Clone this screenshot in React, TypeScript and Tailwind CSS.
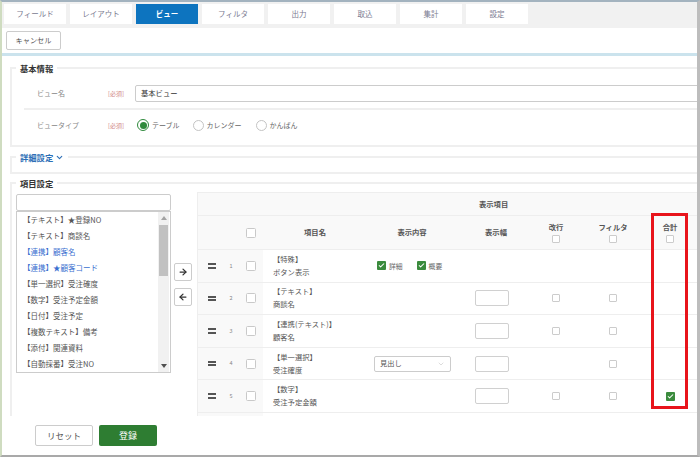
import React from 'react';
import { ArrowLeft, ArrowRight, Check, ChevronDown } from 'lucide-react';

const tabs = ['フィールド', 'レイアウト', 'ビュー', 'フィルタ', '出力', '取込', '集計', '設定'];

const listItems = [
  { label: '【テキスト】★登録NO' },
  { label: '【テキスト】商談名' },
  { label: '【連携】顧客名', link: true },
  { label: '【連携】★顧客コード', link: true },
  { label: '【単一選択】受注確度' },
  { label: '【数字】受注予定金額' },
  { label: '【日付】受注予定' },
  { label: '【複数テキスト】備考' },
  { label: '【添付】関連資料' },
  { label: '【自動採番】受注NO' },
];

type Row = {
  type: string;
  name: string;
  content?: 'checks' | 'select';
  width?: boolean;
  wrap?: boolean;
  filter?: boolean;
  total?: 'off' | 'on';
};

const rows: Row[] = [
  { type: '【特殊】', name: 'ボタン表示', content: 'checks' },
  { type: '【テキスト】', name: '商談名', width: true, wrap: true, filter: true },
  { type: '【連携(テキスト)】', name: '顧客名', width: true, wrap: true, filter: true },
  { type: '【単一選択】', name: '受注確度', content: 'select', width: true, filter: true },
  { type: '【数字】', name: '受注予定金額', width: true, wrap: true, filter: true, total: 'on' },
  { type: '【日付】', name: '受注予定', width: true, wrap: true, filter: true },
];

const cols = 'grid grid-cols-[25px_16px_24px_104px_90px_78px_42px_72px_42px_1fr]';

const Box = ({ size = 10 }: { size?: 8 | 10 }) => (
  <span
    className={
      size === 10
        ? 'block w-[10px] h-[10px] border border-[#c9c9c9] rounded-[1.5px] bg-white'
        : 'block w-[8px] h-[8px] border border-[#cccccc] rounded-[1px] bg-white'
    }
  />
);

const GreenBox = () => (
  <span className="flex items-center justify-center w-[9px] h-[9px] bg-[#3b8b3d] rounded-[1px]">
    <Check className="w-[7px] h-[7px] text-white" strokeWidth={3.5} />
  </span>
);

const Radio = ({ checked }: { checked?: boolean }) =>
  checked ? (
    <span className="flex items-center justify-center w-[12px] h-[12px] rounded-full border-[1.5px] border-[#2f8a3c]">
      <span className="w-[7px] h-[7px] rounded-full bg-[#2f8a3c]" />
    </span>
  ) : (
    <span className="block w-[11px] h-[11px] rounded-full border border-[#c4c4c4] bg-white" />
  );

const Handle = () => (
  <span className="flex flex-col gap-[1.5px]">
    <span className="block w-[8px] h-[2px] bg-[#555]" />
    <span className="block w-[8px] h-[2px] bg-[#555]" />
  </span>
);

export default function App() {
  return (
    <div className="w-[700px] h-[457px] overflow-hidden bg-white flex flex-col border-t-2 border-t-[#a3b3bf] border-r-[3px] border-r-[#bdbdbd] border-b-2 border-b-[#a9a9a9] border-l-2 border-l-[#cfdcc0] font-['Noto_Sans_CJK_JP','Noto_Sans',sans-serif] text-[#555]">
      {/* tabs */}
      <div className="h-[26px] shrink-0 bg-[#f1f1f1] flex gap-[4px] pl-[2px] pt-[2px]">
        {tabs.map((t) => (
          <div
            key={t}
            className={
              t === 'ビュー'
                ? 'w-[62px] h-[20px] flex items-center justify-center bg-[#0d74bf] text-white text-[7.5px] font-bold'
                : 'w-[62px] h-[20px] flex items-center justify-center bg-white text-[#7a7a90] text-[7.5px]'
            }
          >
            {t}
          </div>
        ))}
      </div>

      {/* toolbar */}
      <div className="h-[25px] shrink-0 pl-[4px] pt-[3px]">
        <button className="w-[55px] h-[19px] border border-[#cccccc] rounded-[2px] bg-white text-[7.2px] text-[#555] flex items-center justify-center">
          キャンセル
        </button>
      </div>
      <div className="h-[3px] shrink-0 bg-[#cbe3ed]" />

      {/* scroll area */}
      <div className="flex-1 overflow-hidden pl-[8px] pt-[6px]">
        <fieldset className="border-2 border-r-0 border-[#efefef]">
          <legend className="ml-[4px] px-[4px] text-[8.3px] leading-[12px] font-bold text-[#333]">基本情報</legend>
          <div className="ml-[12px] mt-[4px]">
            <div className="h-[32px] flex items-center border-b-2 border-[#efefef]">
              <div className="w-[84px] pl-[13px] text-[7px] text-[#888]">ビュー名</div>
              <div className="w-[27px] text-[6px] text-[#d08585]">[必須]</div>
              <div className="flex-1 mr-[-10px] h-[17px] border border-[#cccccc] rounded-[2px] flex items-center px-[5px] text-[7.3px] text-[#333]">
                基本ビュー
              </div>
            </div>
            <div className="h-[30px] flex items-center">
              <div className="w-[84px] pl-[13px] text-[7px] text-[#888]">ビュータイプ</div>
              <div className="w-[27px] text-[6px] text-[#d08585]">[必須]</div>
              <div className="flex items-center text-[7px] text-[#666] pl-[2px]">
                <Radio checked />
                <span className="ml-[3px] mr-[13px]">テーブル</span>
                <Radio />
                <span className="ml-[3px] mr-[14px]">カレンダー</span>
                <Radio />
                <span className="ml-[3px]">かんぱん</span>
              </div>
            </div>
          </div>
          <div className="h-[5px]" />
        </fieldset>

        <fieldset className="mt-[4px] border-2 border-r-0 border-[#efefef]">
          <legend className="ml-[4px] px-[4px] text-[8.3px] leading-[12px] font-bold text-[#2d6fb6] flex items-center gap-[2px]">
            詳細設定
            <ChevronDown className="w-[9px] h-[9px]" strokeWidth={3} />
          </legend>
          <div className="h-[9px]" />
        </fieldset>

        <fieldset className="mt-[3px] border-2 border-r-0 border-b-0 border-[#efefef]">
          <legend className="ml-[4px] px-[4px] text-[8.3px] leading-[12px] font-bold text-[#333]">項目設定</legend>
          <div className="flex pl-[4px] pt-[3px]">
            {/* field list */}
            <div className="w-[155px] pt-[2px]">
              <div className="h-[17px] border border-[#cccccc] rounded-[2px] bg-white" />
              <div className="h-[162px] border border-[#cccccc] flex">
                <div className="flex-1">
                  {listItems.map((it) => (
                    <div
                      key={it.label}
                      className={
                        it.link
                          ? 'h-[16px] flex items-center pl-[6px] text-[7.5px] text-[#3a6fd0]'
                          : 'h-[16px] flex items-center pl-[6px] text-[7.5px] text-[#555]'
                      }
                    >
                      {it.label}
                    </div>
                  ))}
                </div>
                <div className="w-[11px] mr-[1px] bg-[#f1f1f1] flex flex-col items-center">
                  <svg className="mt-[4px] w-[6px] h-[4px]" viewBox="0 0 6 4">
                    <polygon points="3,0 6,4 0,4" fill="#a3a3a3" />
                  </svg>
                  <div className="mt-[5px] w-[9px] h-[51px] bg-[#c1c1c1]" />
                  <div className="flex-1" />
                  <svg className="mb-[4px] w-[6px] h-[4px]" viewBox="0 0 6 4">
                    <polygon points="0,0 6,0 3,4" fill="#505050" />
                  </svg>
                </div>
              </div>
            </div>

            {/* move buttons */}
            <div className="ml-[3px] pt-[71px] flex flex-col gap-[7px]">
              <button className="w-[18px] h-[18px] border border-[#cccccc] rounded-[2px] bg-white flex items-center justify-center">
                <ArrowRight className="w-[10px] h-[10px] text-[#333]" strokeWidth={3} />
              </button>
              <button className="w-[18px] h-[18px] border border-[#cccccc] rounded-[2px] bg-white flex items-center justify-center">
                <ArrowLeft className="w-[10px] h-[10px] text-[#333]" strokeWidth={3} />
              </button>
            </div>

            {/* table */}
            <div className="ml-[5px] flex-1 relative border-l border-t border-[#eeeeee]">
              <div className="h-[23px] bg-[#f9f9f9] border-b border-[#eeeeee] flex items-center pl-[281px] text-[7.3px] font-bold text-[#555]">
                表示項目
              </div>
              <div className={`${cols} h-[34px] bg-[#f9f9f9] border-b border-[#eeeeee] text-[7.3px] font-bold text-[#555]`}>
                <div />
                <div />
                <div className="flex items-center justify-center">
                  <Box />
                </div>
                <div className="flex items-center justify-center">項目名</div>
                <div className="flex items-center justify-center">表示内容</div>
                <div className="flex items-center justify-center">表示幅</div>
                <div className="flex flex-col items-center justify-center gap-[3px]">
                  <span className="leading-[9px]">改行</span>
                  <Box size={8} />
                </div>
                <div className="flex flex-col items-center justify-center gap-[3px]">
                  <span className="leading-[9px]">フィルタ</span>
                  <Box size={8} />
                </div>
                <div className="flex flex-col items-center justify-center gap-[3px]">
                  <span className="leading-[9px]">合計</span>
                  <Box size={8} />
                </div>
                <div />
              </div>

              {rows.map((r, i) => (
                <div key={r.name} className={`${cols} h-[32.6px] border-b border-[#eeeeee]`}>
                  <div className="bg-[#f9f9f9] flex items-center pl-[10px]">
                    <Handle />
                  </div>
                  <div className="bg-[#f9f9f9] flex items-center justify-center text-[5.5px] text-[#888]">{i + 1}</div>
                  <div className="bg-[#f9f9f9] flex items-center justify-center">
                    <Box />
                  </div>
                  <div className="flex flex-col justify-center pl-[10px] text-[7.3px] leading-[13px] text-[#555]">
                    <span>{r.type}</span>
                    <span>{r.name}</span>
                  </div>
                  <div className="flex items-center pl-[10px] text-[6.8px] text-[#666]">
                    {r.content === 'checks' && (
                      <>
                        <GreenBox />
                        <span className="ml-[3px] mr-[14px]">詳細</span>
                        <GreenBox />
                        <span className="ml-[3px]">概要</span>
                      </>
                    )}
                    {r.content === 'select' && (
                      <div className="ml-[-3px] w-[77px] h-[16px] border border-[#cccccc] rounded-[2px] flex items-center justify-between px-[5px]">
                        <span className="text-[7.3px] text-[#555]">見出し</span>
                        <ChevronDown className="w-[8px] h-[8px] text-[#bbb]" strokeWidth={1.5} />
                      </div>
                    )}
                  </div>
                  <div className="flex items-center pl-[18px]">
                    {r.width && <div className="w-[34px] h-[16px] border border-[#d0d0d0] rounded-[2px] bg-white" />}
                  </div>
                  <div className="flex items-center justify-center">{r.wrap && <Box size={8} />}</div>
                  <div className="flex items-center justify-center">{r.filter && <Box size={8} />}</div>
                  <div className="flex items-center justify-center">{r.total === 'on' && <GreenBox />}</div>
                  <div />
                </div>
              ))}

              <div className="absolute left-[453px] top-[20px] w-[37px] h-[196px] border-[3px] border-[#e8141b]" />
            </div>
          </div>
        </fieldset>
      </div>

      {/* footer */}
      <div className="h-[39px] shrink-0 flex items-center gap-[6px] pl-[33px] bg-white">
        <button className="w-[58px] h-[21px] border border-[#cccccc] rounded-[2px] bg-white text-[8.5px] text-[#555] flex items-center justify-center">
          リセット
        </button>
        <button className="w-[58px] h-[21px] rounded-[2px] bg-[#2e7d32] text-[9px] text-white flex items-center justify-center">
          登録
        </button>
      </div>
    </div>
  );
}
